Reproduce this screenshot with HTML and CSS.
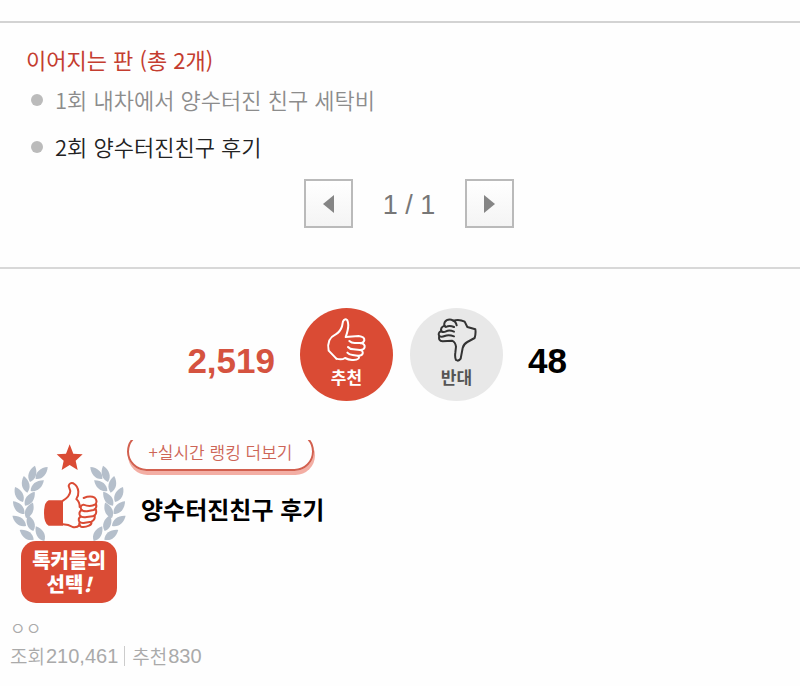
FILE: index.html
```html
<!DOCTYPE html>
<html lang="ko">
<head>
  <meta charset="UTF-8" />
  <meta name="viewport" content="width=device-width, initial-scale=1.0" />
  <title>양수터진친구 후기</title>
  <link rel="stylesheet" href="styles.css">
</head>
<body>
  <section class="series">
    <h2 class="series-title">이어지는 판 (총 2개)</h2>
    <ul class="series-list">
      <li><a href="#">1회 내차에서 양수터진 친구 세탁비</a></li>
      <li class="current"><a href="#">2회 양수터진친구 후기</a></li>
    </ul>
    <div class="pager">
      <button type="button" class="pager-btn" aria-label="이전">
        <svg width="11" height="18" viewBox="0 0 11 18"><path d="M11 0v18L0 9z" fill="#858585"/></svg>
      </button>
      <span class="pager-count">1 / 1</span>
      <button type="button" class="pager-btn" aria-label="다음">
        <svg width="11" height="18" viewBox="0 0 11 18"><path d="M0 0v18l11-9z" fill="#858585"/></svg>
      </button>
    </div>
  </section>

  <section class="votes">
    <span class="count count-up">2,519</span>
    <button type="button" class="vote vote-up">
      <svg class="hand" viewBox="0 0 126 132" fill="none" stroke="currentColor" stroke-width="6" stroke-linecap="round" stroke-linejoin="round">
        <path d="M31 122L8 98Q4 82 10 67Q16 55 29 49Q43 41 48 25L51 10Q56 0 64 7Q69 19 65 37Q63 47 59 57L98 54Q116 56 115 67Q113 75 104 76"/>
        <path d="M70 69Q76 75 86 75H105Q117 78 116 87Q114 96 102 96"/>
        <path d="M66 87Q72 94 82 94L102 96Q112 98 110 107Q107 114 96 113"/>
        <path d="M64 104Q70 111 80 111L95 113Q102 116 97 122Q92 127 78 126Q67 125 57 120Q47 127 31 122"/>
      </svg>
      <span>추천</span>
    </button>
    <button type="button" class="vote vote-down">
      <svg class="hand" viewBox="22 16 122 132" fill="none" stroke="currentColor" stroke-width="6" stroke-linecap="round" stroke-linejoin="round">
        <path d="M72 24Q90 19 106 27L114 43L138 50Q140 62 136 76L114 88Q103 94 100 106L94 138Q88 147 80 142Q76 134 78 120L80 102Q78 88 68 84L40 86Q26 84 30 70"/>
        <path d="M82 38Q80 25 66 21Q52 19 46 29Q42 40 50 43Q60 37 74 43"/>
        <path d="M46 39Q32 44 36 56Q42 60 50 56Q60 51 74 57"/>
        <path d="M36 55Q24 61 30 70Q36 74 46 70Q58 65 74 71"/>
      </svg>
      <span>반대</span>
    </button>
    <span class="count count-down">48</span>
  </section>

  <section class="ranking">
    <div class="badge">
      <svg class="badge-art" viewBox="36 27 342 291">
        <defs>
          <path id="leaf" d="M0 0C-16-13-14-35 0-51C14-35 16-13 0 0z"/>
          <g id="branch" fill="#b5bfcb">
            <use href="#leaf" transform="translate(107 132) rotate(45)"/>
            <use href="#leaf" transform="translate(90 141) rotate(17)"/>
            <use href="#leaf" transform="translate(92 168) rotate(51)"/>
            <use href="#leaf" transform="translate(82 173) rotate(-12)"/>
            <use href="#leaf" transform="translate(75 212) rotate(35)"/>
            <use href="#leaf" transform="translate(69 201) rotate(-28)"/>
            <use href="#leaf" transform="translate(78 249) rotate(24)"/>
            <use href="#leaf" transform="translate(73 237) rotate(-42)"/>
            <use href="#leaf" transform="translate(78 273) rotate(-53)"/>
            <use href="#leaf" transform="translate(100 288) rotate(-19)"/>
            <use href="#leaf" transform="translate(101 314) rotate(-55)"/>
            <use href="#leaf" transform="translate(133 318) rotate(-30)"/>
          </g>
        </defs>
        <use href="#branch"/>
        <use href="#branch" transform="translate(414 0) scale(-1 1)"/>
        <path fill="#da4b34" d="M209 28l11 28 28 2-21 19 6 28-24-15-24 15 6-28-21-19 28-2z"/>
        <path fill="#da4b34" d="M146 196h43v76h-43q-14-6-14-38t14-38z"/>
        <g fill="none" stroke="#da4b34" stroke-width="6" stroke-linecap="round" stroke-linejoin="round">
          <path d="M189 197Q210 184 211 168L206 153Q208 142 220 145Q234 153 235 170Q236 183 229 192Q240 202 239 216"/>
          <path d="M189 268Q206 268 218 276Q230 279 239 270"/>
          <path d="M251 189Q271 181 284 188Q294 198 286 208Q272 217 250 209Q240 211 243 222Q248 230 261 229L281 225Q292 220 288 207"/>
          <path d="M244 226Q235 232 240 242Q246 249 260 246L278 244Q292 239 288 224"/>
          <path d="M242 245Q233 251 238 260Q244 266 255 263L274 260Q286 254 284 243"/>
          <path d="M239 262Q235 270 243 275Q254 278 267 272Q276 268 274 261"/>
        </g>
      </svg>
      <strong class="badge-label">톡커들의<br>선택<em>!</em></strong>
    </div>
    <div class="ranking-body">
      <a href="#" class="more">+실시간 랭킹 더보기</a>
      <h3 class="ranking-title">양수터진친구 후기</h3>
    </div>
  </section>

  <footer class="meta">
    <span class="author">ㅇㅇ</span>
    <div class="stats">
      <span>조회 <b>210,461</b></span>
      <span class="recommend">추천 <b>830</b></span>
    </div>
  </footer>
</body>
</html>
```
FILE: styles.css
```css
* {
  box-sizing: border-box;
}

body {
  margin: 0;
  padding-top: 21px;
  background: #fefefe;
  color: #333;
  font-family: "Noto Sans CJK KR", sans-serif;
}

a {
  color: inherit;
  text-decoration: none;
}

button {
  padding: 0;
  border: none;
  font-family: inherit;
  cursor: pointer;
}

/* series list */
.series {
  padding: 19px 8px 39px 26px;
  border-top: 2px solid #d3d3d3;
  border-bottom: 2px solid #d8d8d8;
}

.series-title {
  margin: 0;
  color: #c43d30;
  font-size: 22px;
  font-weight: 400;
  line-height: 34px;
}

.series-list {
  margin: 0;
  padding: 0;
  list-style: none;
}

.series-list li {
  display: flex;
  align-items: center;
  gap: 12px;
  padding-left: 5px;
  color: #8c8c8c;
  font-size: 22px;
  font-weight: 350;
  line-height: 47px;
}

.series-list li::before {
  content: '';
  width: 12px;
  height: 12px;
  border-radius: 50%;
  background: #bbb;
}

.series-list .current {
  color: #222;
}

.pager {
  display: flex;
  justify-content: center;
  align-items: center;
  gap: 30px;
  margin-top: 9px;
}

.pager-btn {
  display: flex;
  justify-content: center;
  align-items: center;
  width: 49px;
  height: 49px;
  border: 2px solid #bababa;
  background: linear-gradient(#fff, #f4f4f4);
}

.pager-count {
  padding-top: 4px;
  color: #777;
  font-family: "Liberation Sans", Arial, sans-serif;
  font-size: 27px;
}

/* votes */
.votes {
  display: grid;
  grid-template-columns: 1fr 93px 93px 1fr;
  align-items: center;
  column-gap: 17px;
  padding: 39px 0 39px 3px;
}

.count {
  padding: 12px 8px 0;
  font-family: "Liberation Sans", Arial, sans-serif;
  font-size: 35px;
  font-weight: bold;
  line-height: 40px;
}

.count-up {
  color: #d55340;
  text-align: right;
}

.count-down {
  color: #000;
}

.vote {
  display: flex;
  flex-direction: column;
  align-items: center;
  height: 93px;
  padding-top: 10px;
  border-radius: 50%;
  font-size: 17px;
  font-weight: 700;
  line-height: 30px;
}

.vote-up {
  background: #da4b34;
  color: #fff;
}

.vote-down {
  background: #e8e8e8;
  color: #555;
}

.hand {
  width: 42px;
  height: 44px;
}

.vote-down .hand {
  color: #333;
}

/* ranking */
.ranking {
  display: flex;
  gap: 1px;
  padding-left: 12px;
  overflow: hidden;
}

.badge {
  display: flex;
  flex-direction: column;
  align-items: center;
  width: 114px;
  padding-top: 4px;
}

.badge-art {
  width: 100%;
  height: 97px;
}

.badge-label {
  width: 96px;
  padding: 7px 0;
  border-radius: 15px;
  background: #da4b34;
  color: #fff;
  font-size: 20px;
  font-weight: 900;
  line-height: 24px;
  text-align: center;
}

.more {
  display: block;
  width: 187px;
  margin-top: -8px;
  border: 2px solid #d2604f;
  border-radius: 20px;
  box-shadow: 1px 4px 0 #f3aea4;
  color: #cd6557;
  font-size: 17px;
  font-weight: 350;
  line-height: 35px;
  text-align: center;
}

.ranking-title {
  margin: 20px 0 0 14px;
  color: #000;
  font-size: 24px;
  font-weight: 700;
  line-height: 36px;
}

/* meta */
.meta {
  padding: 11px 10px;
  color: #aaa;
  font-weight: 350;
}

.author {
  display: block;
  font-size: 17px;
  line-height: 28px;
}

.stats {
  display: flex;
  align-items: center;
  font-size: 19px;
  line-height: 28px;
}

.stats span {
  display: flex;
  gap: 1px;
}

.stats b {
  font-family: "Liberation Sans", Arial, sans-serif;
  font-size: 20px;
  font-weight: 400;
}

.recommend::before {
  content: '';
  align-self: center;
  width: 1px;
  height: 20px;
  margin: 0 6px;
  background: #ccc;
}
```
